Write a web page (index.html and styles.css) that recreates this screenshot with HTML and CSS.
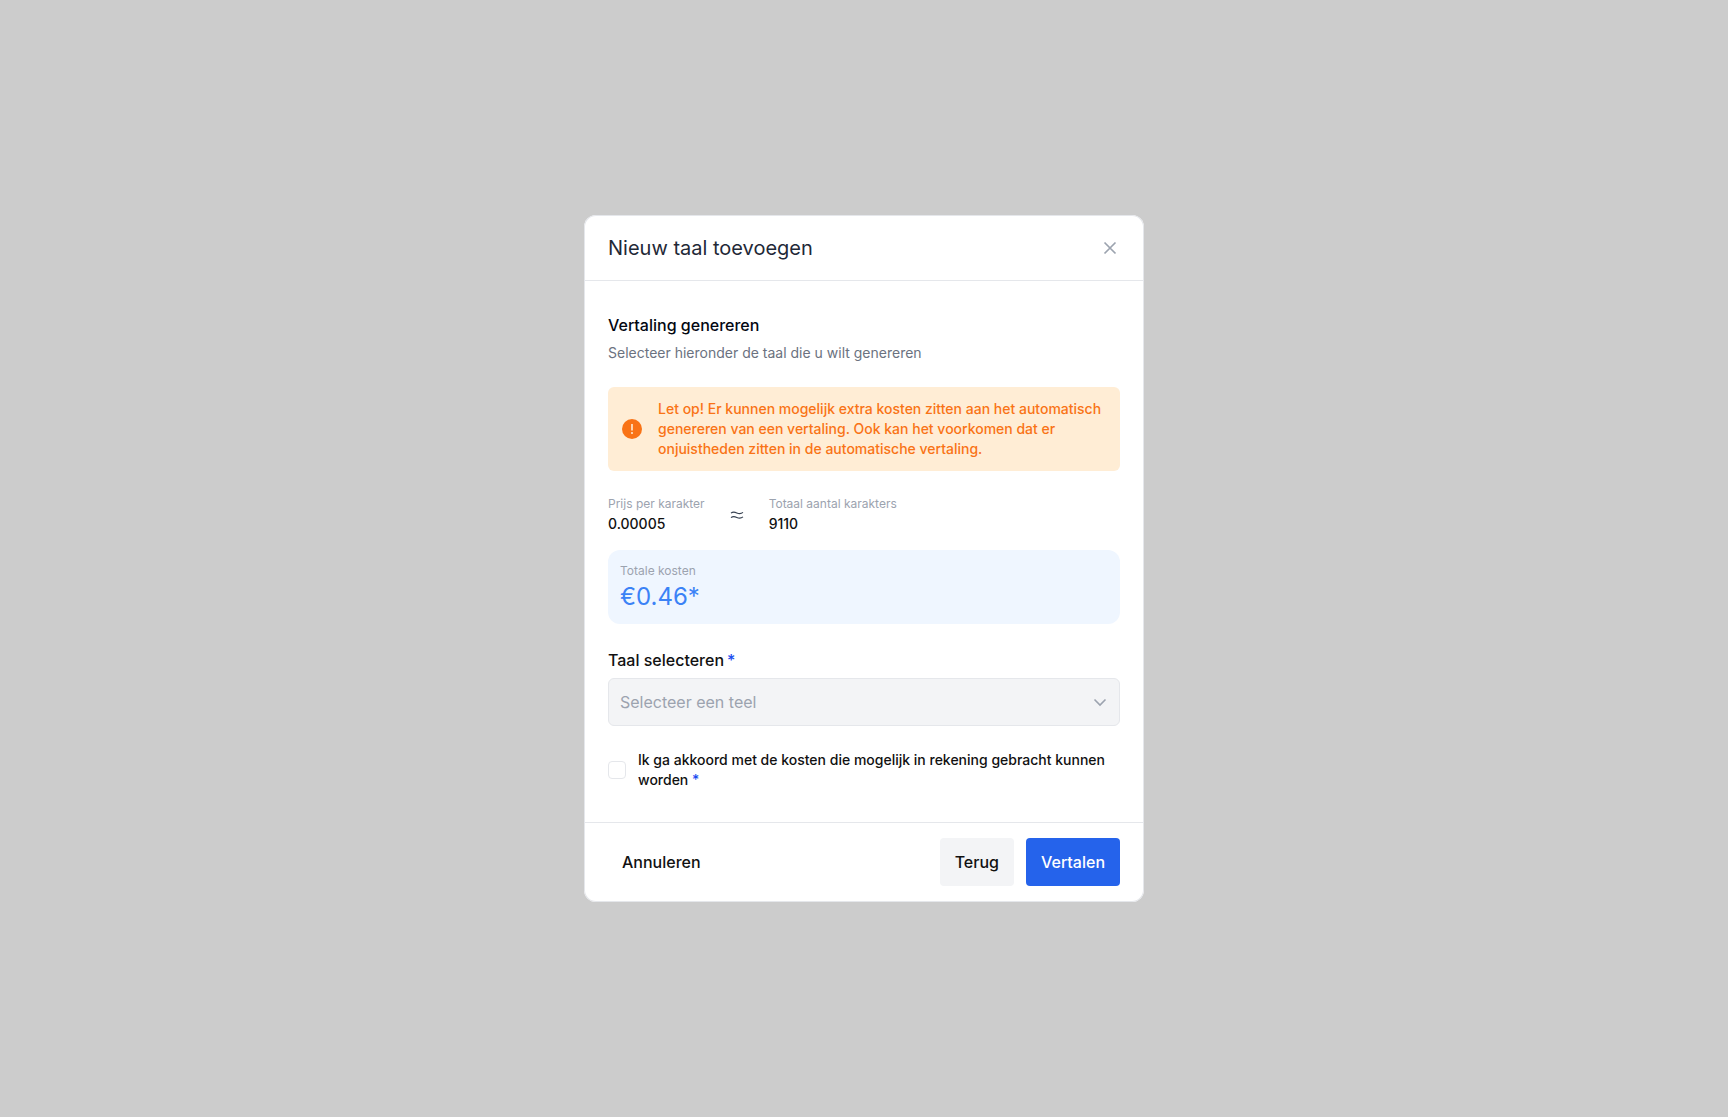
FILE: index.html
```html
<!DOCTYPE html>
<html lang="nl">
<head>
<meta charset="UTF-8">
<meta name="viewport" content="width=device-width, initial-scale=1.0">
<title>Nieuw taal toevoegen</title>
<link rel="stylesheet" href="styles.css">
</head>
<body>

<form class="modal" role="dialog" aria-labelledby="modalTitle">
    <header class="modal-header">
        <h1 class="modal-title" id="modalTitle">Nieuw taal toevoegen</h1>
        <button type="button" class="close" aria-label="Sluiten">
            <svg width="20" height="20" viewBox="0 0 20 20" fill="none" stroke="currentColor" stroke-width="1.7">
                <path d="M4.500 4.500l11 11M15.500 4.500l-11 11"/>
            </svg>
        </button>
    </header>

    <div class="modal-body">
        <h2 class="heading">Vertaling genereren</h2>
        <p class="intro">Selecteer hieronder de taal die u wilt genereren</p>

        <div class="alert">
            <svg class="alert-icon" width="20" height="20" viewBox="0 0 20 20">
                <circle cx="10" cy="10" r="10" fill="#f97316"/>
                <path d="M10 5v6.500" stroke="#ffedd5" stroke-width="1.6"/>
                <circle cx="10" cy="14" r="1" fill="#ffedd5"/>
            </svg>
            <p>Let op! Er kunnen mogelijk extra kosten zitten aan het automatisch genereren van een vertaling. Ook kan het voorkomen dat er onjuistheden zitten in de automatische vertaling.</p>
        </div>

        <div class="prices">
            <div class="price">
                <span class="label">Prijs per karakter</span>
                <span class="value">0.00005</span>
            </div>
            <svg width="16" height="16" viewBox="0 0 16 16" fill="none" stroke="#374151" stroke-width="1.1">
                <path d="M2 6.200C3.500 4.800 5.500 4.800 7.800 5.900s4.200 1.100 6.200-.5M2 10.700c1.500-1.400 3.500-1.400 5.800-.3s4.200 1.100 6.200-.5"/>
            </svg>
            <div class="price">
                <span class="label">Totaal aantal karakters</span>
                <span class="value">9110</span>
            </div>
        </div>

        <div class="total">
            <span class="label">Totale kosten</span>
            <span class="amount">€0.46*</span>
        </div>

        <label class="select-label" for="language">Taal selecteren<span class="required">*</span></label>
        <div class="select-wrap">
            <select id="language" disabled>
                <option>Selecteer een teel</option>
            </select>
            <svg class="chevron" width="16" height="16" viewBox="0 0 16 16" fill="none" stroke="#9ca3af" stroke-width="1.6">
                <path d="M2.500 5.500L8 11l5.500-5.500"/>
            </svg>
        </div>

        <div class="agree">
            <input type="checkbox" id="agree">
            <label for="agree">Ik ga akkoord met de kosten die mogelijk in rekening gebracht kunnen worden <span class="required">*</span></label>
        </div>
    </div>

    <footer class="modal-footer">
        <button type="button" class="btn cancel">Annuleren</button>
        <button type="button" class="btn back">Terug</button>
        <button type="submit" class="btn primary">Vertalen</button>
    </footer>
</form>

</body>
</html>
```
FILE: styles.css
```css
* {
    box-sizing: border-box;
}
body {
    margin: 0;
    min-height: 100vh;
    display: flex;
    justify-content: center;
    align-items: center;
    background-color: #cccccc;
    color: #111111;
    font-family: Inter, sans-serif;
    font-size: 14px;
    line-height: 20px;
}
h1, h2, p {
    margin: 0;
}
button, select {
    font-family: inherit;
}
svg {
    display: block;
    flex-shrink: 0;
}

/* Modal */
.modal {
    width: 100%;
    max-width: 560px;
    background-color: white;
    border-radius: 12px;
    box-shadow: inset 0 0 0 1px #e5e7eb;
}
.modal-header {
    display: flex;
    align-items: center;
    justify-content: space-between;
    padding: 19px 24px 18px;
    border-bottom: 1px solid #e5e7eb;
}
.modal-title {
    color: #1f2937;
    font-size: 20px;
    font-weight: 400;
    line-height: 28px;
}
.close {
    padding: 0;
    border: none;
    background: none;
    color: #9ca3af;
    cursor: pointer;
}
.modal-body {
    padding: 32px 24px;
}
.heading {
    color: #030712;
    font-size: 16px;
    font-weight: 500;
    line-height: 24px;
}
.intro {
    margin-top: 6px;
    color: #6b7280;
}

/* Warning */
.alert {
    display: flex;
    align-items: center;
    gap: 16px;
    margin-top: 24px;
    padding: 12px 14px;
    border-radius: 6px;
    background-color: #ffedd5;
    color: #f97316;
    font-weight: 500;
}

/* Costs */
.prices {
    display: flex;
    align-items: center;
    gap: 24px;
    margin-top: 24px;
}
.price, .total {
    display: flex;
    flex-direction: column;
    gap: 1px;
}
.label {
    color: #9ca3af;
    font-size: 12px;
    line-height: 18px;
}
.value {
    font-weight: 500;
}
.total {
    margin-top: 16px;
    padding: 12px 12px 11px;
    border-radius: 12px;
    background-color: #eff6ff;
}
.amount {
    color: #3b82f6;
    font-size: 24px;
    line-height: 32px;
}

/* Fields */
.select-label {
    display: flex;
    gap: 3px;
    margin: 24px 0 6px;
    font-size: 16px;
    font-weight: 500;
    line-height: 24px;
}
.required {
    color: #1a4cf0;
}
.select-wrap {
    position: relative;
}
select {
    display: block;
    width: 100%;
    height: 48px;
    padding: 0 40px 0 11px;
    border: 1px solid #e5e7eb;
    border-radius: 6px;
    background-color: #f3f4f6;
    color: #9ca3af;
    font-size: 16px;
    opacity: 1;
    appearance: none;
}
.chevron {
    position: absolute;
    top: 16px;
    right: 12px;
    pointer-events: none;
}
.agree {
    display: flex;
    align-items: center;
    gap: 12px;
    margin-top: 24px;
    font-weight: 500;
}
.agree input {
    flex-shrink: 0;
    width: 18px;
    height: 18px;
    margin: 0;
    border: 1px solid #e5e7eb;
    border-radius: 4px;
    background-color: white;
    appearance: none;
}
.agree input:checked {
    background-color: #2563eb;
}

/* Footer */
.modal-footer {
    display: flex;
    gap: 12px;
    padding: 15px 24px 16px;
    border-top: 1px solid #e5e7eb;
}
.btn {
    height: 48px;
    padding: 0 15px;
    border: none;
    border-radius: 4px;
    background-color: transparent;
    color: #111111;
    font-size: 16px;
    font-weight: 500;
    cursor: pointer;
}
.cancel {
    margin-right: auto;
    padding: 0 14px;
}
.back {
    background-color: #f3f4f6;
}
.primary {
    background-color: #2563eb;
    color: white;
}
```
